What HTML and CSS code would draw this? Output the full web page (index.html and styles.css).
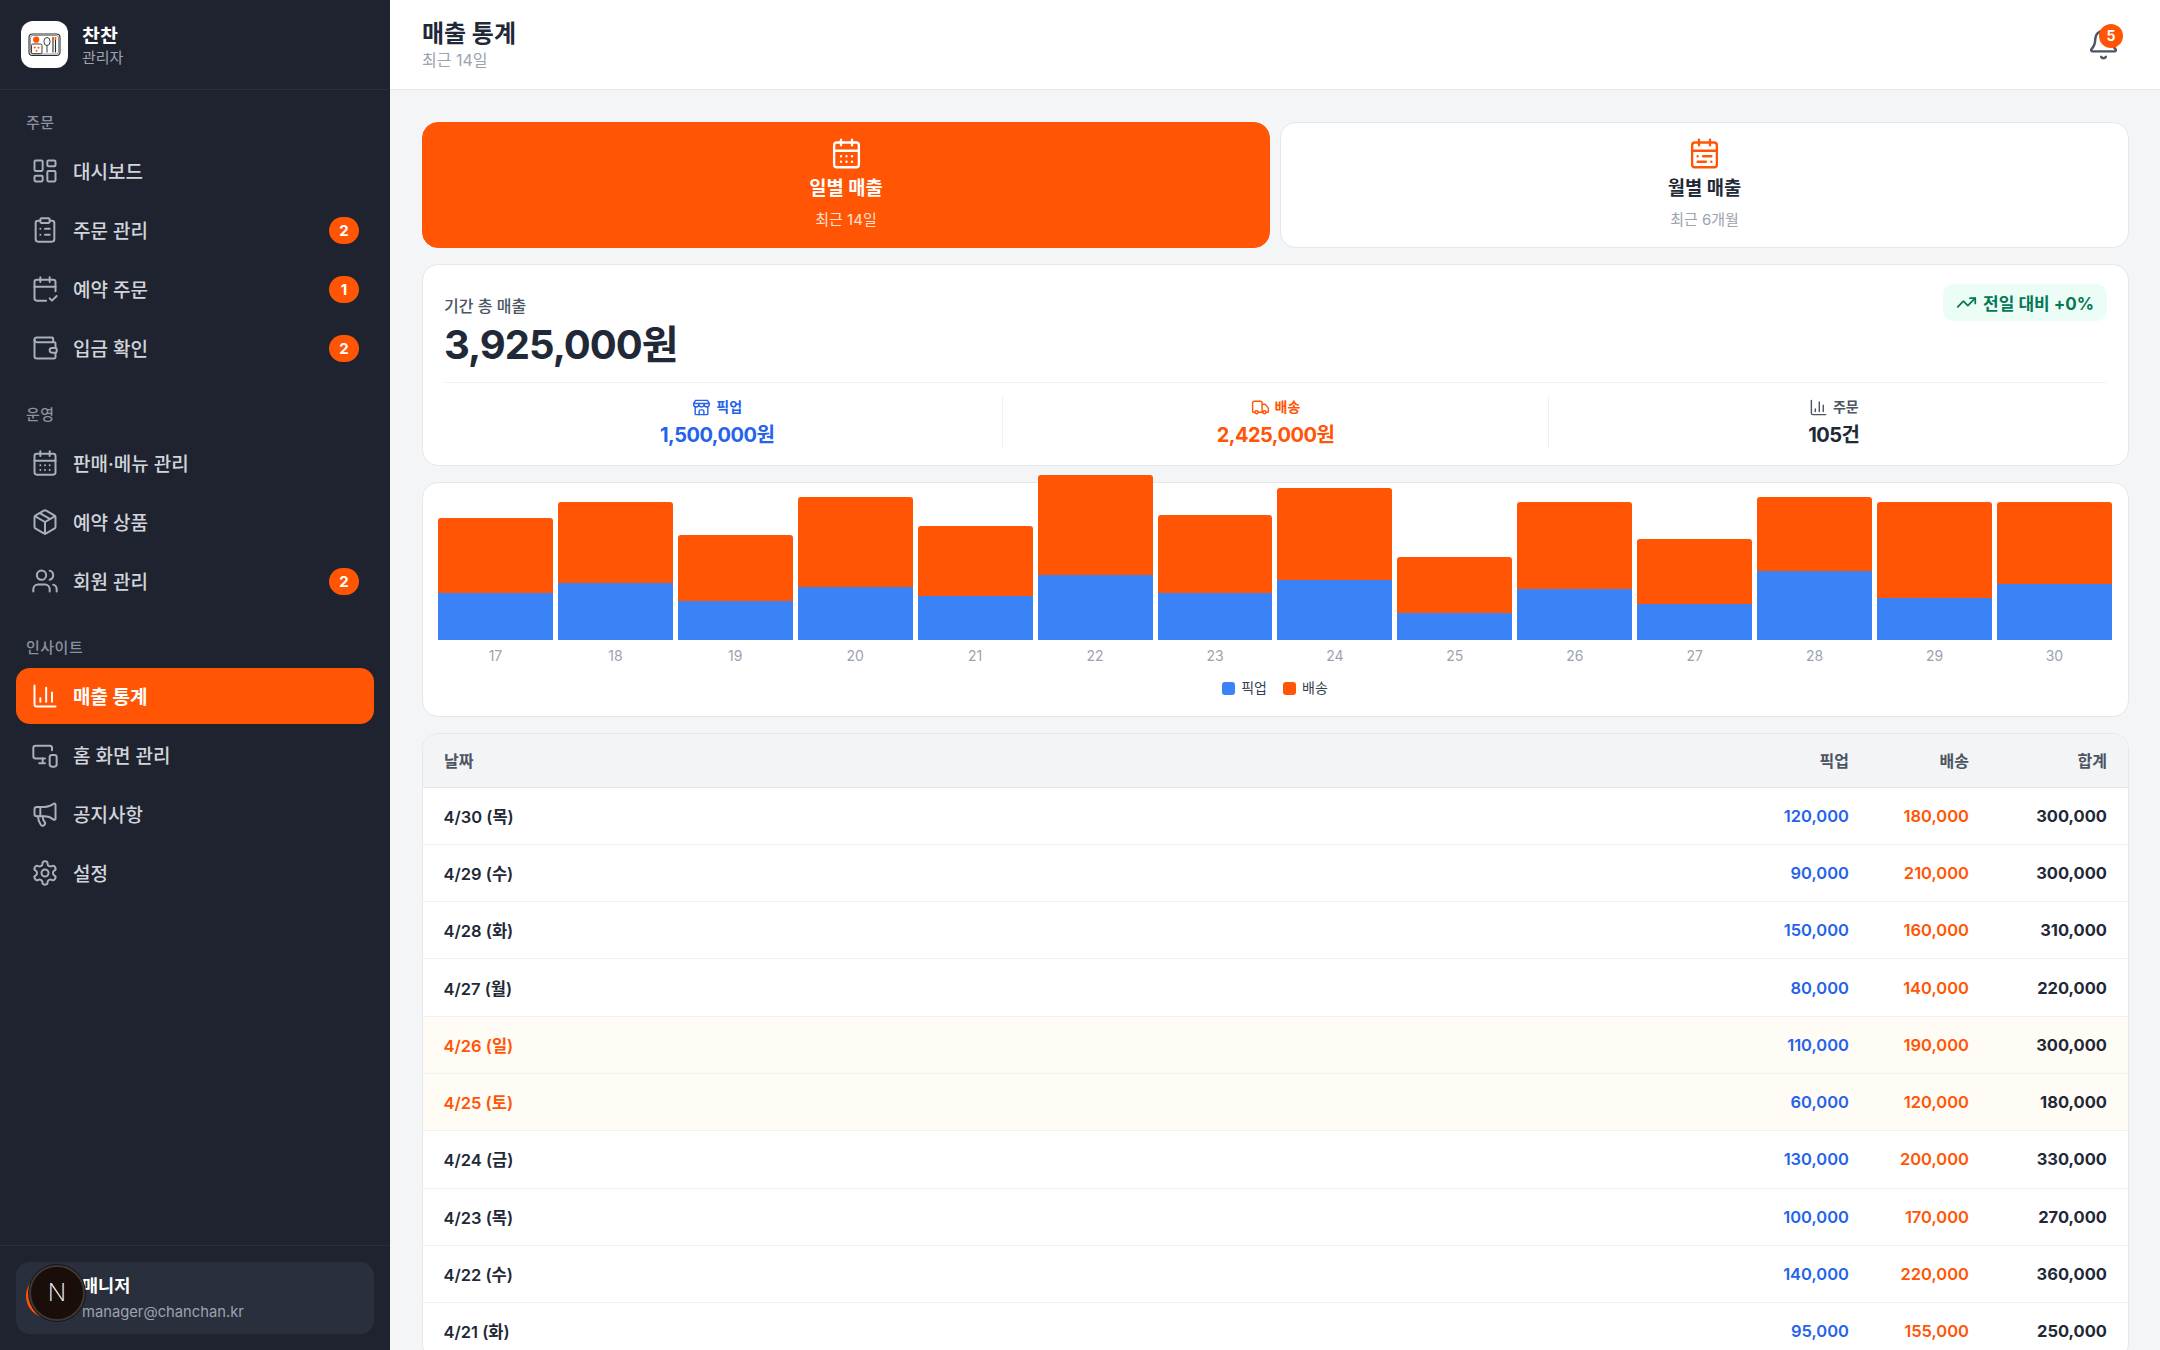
FILE: index.html
```html
<!DOCTYPE html>
<html lang="ko">
<head>
    <meta charset="utf-8">
    <title>매출 통계</title>
    <link rel="stylesheet" href="styles.css">
</head>
<body>
<div class="layout">
    <aside class="sidebar">
        <div class="brand">
            <div class="brand-logo">
                <svg viewBox="0 0 47 47" width="47" height="47" fill="none" stroke="#2b2b2b" stroke-width="0.9">
                    <rect x="8" y="13" width="31" height="21.500" rx="3.500" stroke-width="1.100"/>
                    <rect x="9.500" y="14.500" width="28" height="18.500" rx="2.200" stroke-width="0.500"/>
                    <circle cx="15.200" cy="18.700" r="3.100" fill="#ff5505" stroke="none"/>
                    <rect x="10.500" y="23" width="10.500" height="9.700" rx="1.300"/>
                    <circle cx="13.800" cy="26.500" r="1" fill="#ff5505" stroke="none"/>
                    <circle cx="17.500" cy="26.800" r="1" fill="#ff5505" stroke="none"/>
                    <circle cx="15.500" cy="29.800" r="1" fill="#ff5505" stroke="none"/>
                    <ellipse cx="26" cy="20.500" rx="3.100" ry="4"/>
                    <path d="M26 24.500v7"/>
                    <path d="M32 16v15.500M34.500 16v15.500" stroke-width="1.100"/>
                    <path d="M32 16v3M34.500 16v3" stroke="#ff5505" stroke-width="1.400"/>
                </svg>
            </div>
            <div>
                <div class="brand-name">찬찬</div>
                <div class="brand-sub">관리자</div>
            </div>
        </div>

        <nav class="nav">
            <div class="nav-label">주문</div>
            <a class="nav-item">
                <svg class="nav-icon" viewBox="0 0 24 24"><rect x="3" y="3" width="7" height="9" rx="1"/><rect x="14" y="3" width="7" height="5" rx="1"/><rect x="14" y="12" width="7" height="9" rx="1"/><rect x="3" y="16" width="7" height="5" rx="1"/></svg>
                <span>대시보드</span>
            </a>
            <a class="nav-item">
                <svg class="nav-icon" viewBox="0 0 24 24"><rect x="8" y="2" width="8" height="4" rx="1"/><path d="M16 4h2a2 2 0 0 1 2 2v14a2 2 0 0 1-2 2H6a2 2 0 0 1-2-2V6a2 2 0 0 1 2-2h2"/><path d="M12 11h4M12 16h4M8 11h.01M8 16h.01"/></svg>
                <span>주문 관리</span>
                <b class="nav-badge">2</b>
            </a>
            <a class="nav-item">
                <svg class="nav-icon" viewBox="0 0 24 24"><path d="M8 2v4M16 2v4"/><path d="M21 14V6a2 2 0 0 0-2-2H5a2 2 0 0 0-2 2v14a2 2 0 0 0 2 2h8"/><path d="M3 10h18"/><path d="m16 20 2 2 4-4"/></svg>
                <span>예약 주문</span>
                <b class="nav-badge">1</b>
            </a>
            <a class="nav-item">
                <svg class="nav-icon" viewBox="0 0 24 24"><path d="M19 7V4a1 1 0 0 0-1-1H5a2 2 0 0 0 0 4h15a1 1 0 0 1 1 1v4h-3a2 2 0 0 0 0 4h3a1 1 0 0 0 1-1v-2a1 1 0 0 0-1-1"/><path d="M3 5v14a2 2 0 0 0 2 2h15a1 1 0 0 0 1-1v-4"/></svg>
                <span>입금 확인</span>
                <b class="nav-badge">2</b>
            </a>

            <div class="nav-label">운영</div>
            <a class="nav-item">
                <svg class="nav-icon" viewBox="0 0 24 24"><rect x="3" y="4" width="18" height="18" rx="2"/><path d="M8 2v4M16 2v4M3 10h18M8 14h.01M12 14h.01M16 14h.01M8 18h.01M12 18h.01M16 18h.01"/></svg>
                <span>판매·메뉴 관리</span>
            </a>
            <a class="nav-item">
                <svg class="nav-icon" viewBox="0 0 24 24"><path d="M21 8a2 2 0 0 0-1-1.730l-7-4a2 2 0 0 0-2 0l-7 4A2 2 0 0 0 3 8v8a2 2 0 0 0 1 1.730l7 4a2 2 0 0 0 2 0l7-4A2 2 0 0 0 21 16Z"/><path d="m3.300 7 8.700 5 8.700-5M12 22V12M7.500 4.300l9 5.200"/></svg>
                <span>예약 상품</span>
            </a>
            <a class="nav-item">
                <svg class="nav-icon" viewBox="0 0 24 24"><path d="M16 21v-2a4 4 0 0 0-4-4H6a4 4 0 0 0-4 4v2"/><circle cx="9" cy="7" r="4"/><path d="M22 21v-2a4 4 0 0 0-3-3.870M16 3.130a4 4 0 0 1 0 7.750"/></svg>
                <span>회원 관리</span>
                <b class="nav-badge">2</b>
            </a>

            <div class="nav-label">인사이트</div>
            <a class="nav-item active">
                <svg class="nav-icon" viewBox="0 0 24 24"><path d="M3 3v16a2 2 0 0 0 2 2h16M8 17v-3M13 17V5M18 17V9"/></svg>
                <span>매출 통계</span>
            </a>
            <a class="nav-item">
                <svg class="nav-icon" viewBox="0 0 24 24"><path d="M18 8V6a2 2 0 0 0-2-2H4a2 2 0 0 0-2 2v7a2 2 0 0 0 2 2h8"/><path d="M10 19v-4M7 19h5"/><rect x="16" y="12" width="6" height="10" rx="2"/></svg>
                <span>홈 화면 관리</span>
            </a>
            <a class="nav-item">
                <svg class="nav-icon" viewBox="0 0 24 24"><path d="M11 6a13 13 0 0 0 8.400-2.800A1 1 0 0 1 21 4v12a1 1 0 0 1-1.600.8A13 13 0 0 0 11 14H5a2 2 0 0 1-2-2V8a2 2 0 0 1 2-2z"/><path d="M6 14a12 12 0 0 0 2.400 7.200 2 2 0 0 0 3.200-2.400A8 8 0 0 1 10 14"/><path d="M8 6v8"/></svg>
                <span>공지사항</span>
            </a>
            <a class="nav-item">
                <svg class="nav-icon" viewBox="0 0 24 24"><path d="M12.220 2h-.44a2 2 0 0 0-2 2v.18a2 2 0 0 1-1 1.730l-.43.25a2 2 0 0 1-2 0l-.15-.08a2 2 0 0 0-2.730.73l-.22.38a2 2 0 0 0 .73 2.730l.15.1a2 2 0 0 1 1 1.720v.51a2 2 0 0 1-1 1.740l-.15.09a2 2 0 0 0-.73 2.730l.22.38a2 2 0 0 0 2.730.73l.15-.08a2 2 0 0 1 2 0l.43.25a2 2 0 0 1 1 1.730V20a2 2 0 0 0 2 2h.44a2 2 0 0 0 2-2v-.18a2 2 0 0 1 1-1.730l.43-.25a2 2 0 0 1 2 0l.15.08a2 2 0 0 0 2.730-.73l.22-.39a2 2 0 0 0-.73-2.730l-.15-.08a2 2 0 0 1-1-1.740v-.5a2 2 0 0 1 1-1.740l.15-.09a2 2 0 0 0 .73-2.730l-.22-.38a2 2 0 0 0-2.730-.73l-.15.08a2 2 0 0 1-2 0l-.43-.25a2 2 0 0 1-1-1.730V4a2 2 0 0 0-2-2z"/><circle cx="12" cy="12" r="3"/></svg>
                <span>설정</span>
            </a>
        </nav>

        <div class="side-footer">
            <div class="user-card">
                <div class="user-avatar"></div>
                <div>
                    <div class="user-name">매니저</div>
                    <div class="user-mail">manager@chanchan.kr</div>
                </div>
                <div class="dev-badge">N</div>
            </div>
        </div>
    </aside>

    <div class="main">
        <header class="topbar">
            <div>
                <h1 class="page-title">매출 통계</h1>
                <div class="page-sub">최근 14일</div>
            </div>
            <div class="bell">
                <svg viewBox="0 0 24 24" width="33" height="33" fill="none" stroke="#4b5563" stroke-width="1.800" stroke-linecap="round" stroke-linejoin="round"><path d="M10.300 21a2 2 0 0 0 3.400 0"/><path d="M3.300 15.300A1 1 0 0 0 4 17h16a1 1 0 0 0 .7-1.700C19.400 14 18 12.500 18 8A6 6 0 0 0 6 8c0 4.500-1.400 6-2.700 7.300"/></svg>
                <span class="bell-count">5</span>
            </div>
        </header>

        <div class="content">
            <div class="tabs">
                <div class="tab active">
                    <svg class="tab-icon" viewBox="0 0 24 24"><rect x="3" y="4" width="18" height="18" rx="2"/><path d="M8 2v4M16 2v4M3 10h18M8 14h.01M12 14h.01M16 14h.01M8 18h.01M12 18h.01M16 18h.01"/></svg>
                    <div class="tab-title">일별 매출</div>
                    <div class="tab-sub">최근 14일</div>
                </div>
                <div class="tab">
                    <svg class="tab-icon" viewBox="0 0 24 24"><rect x="3" y="4" width="18" height="18" rx="2"/><path d="M8 2v4M16 2v4M3 10h18M7 14h.01M11 14h6M7 18h6M17 18h.01"/></svg>
                    <div class="tab-title">월별 매출</div>
                    <div class="tab-sub">최근 6개월</div>
                </div>
            </div>

            <section class="card summary">
                <div class="summary-top">
                    <div>
                        <div class="summary-label">기간 총 매출</div>
                        <div class="summary-total">3,925,000원</div>
                    </div>
                    <div class="trend">
                        <svg viewBox="0 0 24 24" width="21" height="21" fill="none" stroke="#047857" stroke-width="2" stroke-linecap="round" stroke-linejoin="round"><path d="M16 7h6v6"/><path d="m22 7-8.500 8.500-5-5L2 17"/></svg>
                        전일 대비 +0%
                    </div>
                </div>
                <div class="stats">
                    <div class="stat">
                        <div class="stat-label pickup">
                            <svg viewBox="0 0 24 24" width="19" height="19" fill="none" stroke="currentColor" stroke-width="1.800" stroke-linecap="round" stroke-linejoin="round"><path d="m2 7 2.500-4h15L22 7M2 7v1a3.300 3.300 0 0 0 6.700 0 3.300 3.300 0 0 0 6.600 0 3.300 3.300 0 0 0 6.700 0V7M2 7h20"/><path d="M4 11v9a1 1 0 0 0 1 1h14a1 1 0 0 0 1-1v-9"/><path d="M15 21v-4a2 2 0 0 0-2-2h-2a2 2 0 0 0-2 2v4"/></svg>
                            픽업
                        </div>
                        <div class="stat-value pickup">1,500,000원</div>
                    </div>
                    <div class="stat stat-mid">
                        <div class="stat-label delivery">
                            <svg viewBox="0 0 24 24" width="19" height="19" fill="none" stroke="currentColor" stroke-width="1.800" stroke-linecap="round" stroke-linejoin="round"><path d="M14 18V6a2 2 0 0 0-2-2H4a2 2 0 0 0-2 2v11a1 1 0 0 0 1 1h2M15 18H9M19 18h2a1 1 0 0 0 1-1v-3.650a1 1 0 0 0-.22-.62l-3.480-4.350A1 1 0 0 0 17.500 8H14"/><circle cx="17" cy="18" r="2"/><circle cx="7" cy="18" r="2"/></svg>
                            배송
                        </div>
                        <div class="stat-value delivery">2,425,000원</div>
                    </div>
                    <div class="stat">
                        <div class="stat-label">
                            <svg viewBox="0 0 24 24" width="19" height="19" fill="none" stroke="currentColor" stroke-width="1.800" stroke-linecap="round" stroke-linejoin="round"><path d="M3 3v16a2 2 0 0 0 2 2h16M8 17v-3M13 17V5M18 17V9"/></svg>
                            주문
                        </div>
                        <div class="stat-value">105건</div>
                    </div>
                </div>
            </section>

            <section class="card chart">
                <div class="bars">
                    <div class="bar-col"><div class="bar-top" style="height:75px"></div><div class="bar-bot" style="height:47px"></div><span class="bar-day">17</span></div>
                    <div class="bar-col"><div class="bar-top" style="height:81px"></div><div class="bar-bot" style="height:57px"></div><span class="bar-day">18</span></div>
                    <div class="bar-col"><div class="bar-top" style="height:66px"></div><div class="bar-bot" style="height:39px"></div><span class="bar-day">19</span></div>
                    <div class="bar-col"><div class="bar-top" style="height:90px"></div><div class="bar-bot" style="height:53px"></div><span class="bar-day">20</span></div>
                    <div class="bar-col"><div class="bar-top" style="height:70px"></div><div class="bar-bot" style="height:44px"></div><span class="bar-day">21</span></div>
                    <div class="bar-col"><div class="bar-top" style="height:100px"></div><div class="bar-bot" style="height:65px"></div><span class="bar-day">22</span></div>
                    <div class="bar-col"><div class="bar-top" style="height:78px"></div><div class="bar-bot" style="height:47px"></div><span class="bar-day">23</span></div>
                    <div class="bar-col"><div class="bar-top" style="height:92px"></div><div class="bar-bot" style="height:60px"></div><span class="bar-day">24</span></div>
                    <div class="bar-col"><div class="bar-top" style="height:56px"></div><div class="bar-bot" style="height:27px"></div><span class="bar-day">25</span></div>
                    <div class="bar-col"><div class="bar-top" style="height:87px"></div><div class="bar-bot" style="height:51px"></div><span class="bar-day">26</span></div>
                    <div class="bar-col"><div class="bar-top" style="height:65px"></div><div class="bar-bot" style="height:36px"></div><span class="bar-day">27</span></div>
                    <div class="bar-col"><div class="bar-top" style="height:74px"></div><div class="bar-bot" style="height:69px"></div><span class="bar-day">28</span></div>
                    <div class="bar-col"><div class="bar-top" style="height:96px"></div><div class="bar-bot" style="height:42px"></div><span class="bar-day">29</span></div>
                    <div class="bar-col"><div class="bar-top" style="height:82px"></div><div class="bar-bot" style="height:56px"></div><span class="bar-day">30</span></div>
                </div>
                <div class="legend">
                    <span class="legend-item"><i class="swatch blue"></i>픽업</span>
                    <span class="legend-item"><i class="swatch orange"></i>배송</span>
                </div>
            </section>

            <section class="card table-card">
                <table class="sales">
                    <thead>
                        <tr><th>날짜</th><th class="num col-a">픽업</th><th class="num col-b">배송</th><th class="num col-c">합계</th></tr>
                    </thead>
                    <tbody>
                        <tr><td>4/30 (목)</td><td class="num pickup">120,000</td><td class="num delivery">180,000</td><td class="num total">300,000</td></tr>
                        <tr><td>4/29 (수)</td><td class="num pickup">90,000</td><td class="num delivery">210,000</td><td class="num total">300,000</td></tr>
                        <tr><td>4/28 (화)</td><td class="num pickup">150,000</td><td class="num delivery">160,000</td><td class="num total">310,000</td></tr>
                        <tr><td>4/27 (월)</td><td class="num pickup">80,000</td><td class="num delivery">140,000</td><td class="num total">220,000</td></tr>
                        <tr class="weekend"><td>4/26 (일)</td><td class="num pickup">110,000</td><td class="num delivery">190,000</td><td class="num total">300,000</td></tr>
                        <tr class="weekend"><td>4/25 (토)</td><td class="num pickup">60,000</td><td class="num delivery">120,000</td><td class="num total">180,000</td></tr>
                        <tr><td>4/24 (금)</td><td class="num pickup">130,000</td><td class="num delivery">200,000</td><td class="num total">330,000</td></tr>
                        <tr><td>4/23 (목)</td><td class="num pickup">100,000</td><td class="num delivery">170,000</td><td class="num total">270,000</td></tr>
                        <tr><td>4/22 (수)</td><td class="num pickup">140,000</td><td class="num delivery">220,000</td><td class="num total">360,000</td></tr>
                        <tr><td>4/21 (화)</td><td class="num pickup">95,000</td><td class="num delivery">155,000</td><td class="num total">250,000</td></tr>
                    </tbody>
                </table>
            </section>
        </div>
    </div>
</div>
</body>
</html>
```
FILE: styles.css
```css
* {
    box-sizing: border-box;
}

html, body {
    margin: 0;
    height: 100%;
    overflow: hidden;
}

body {
    font-family: Inter, "Noto Sans CJK KR", sans-serif;
    color: #1f2937;
    background: #f4f5f7;
}

.layout {
    display: flex;
    height: 100vh;
}

/* sidebar */
.sidebar {
    width: 390px;
    flex-shrink: 0;
    display: flex;
    flex-direction: column;
    background: #1f2330;
}

.brand {
    height: 90px;
    padding: 0 21px;
    display: flex;
    align-items: center;
    gap: 14px;
    border-bottom: 1px solid #2a2f3d;
}

.brand-logo {
    width: 47px;
    height: 47px;
    background: #fff;
    border-radius: 12px;
    display: flex;
    align-items: center;
    justify-content: center;
}

.brand-name {
    font-size: 19.500px;
    line-height: 26px;
    font-weight: 700;
    color: #fff;
}

.brand-sub {
    font-size: 15px;
    line-height: 18px;
    color: #9ca3af;
}

.nav {
    flex: 1;
    padding: 20px 16px 0;
}

.nav-label {
    padding: 0 10px;
    height: 24px;
    margin: 26px 0 9px;
    font-size: 15px;
    line-height: 26px;
    letter-spacing: 0.5px;
    font-weight: 500;
    color: #8b919e;
}

.nav-label:first-child {
    margin-top: 0;
}

.nav-item {
    height: 56px;
    margin-bottom: 3px;
    padding: 0 15px;
    display: flex;
    align-items: center;
    gap: 14px;
    border-radius: 14px;
    font-size: 19px;
    font-weight: 500;
    color: #d1d5db;
}

.nav-item span {
    flex: 1;
    padding-bottom: 2px;
}

.nav-item.active {
    background: #ff5505;
    color: #fff;
    font-weight: 700;
}

.nav-icon {
    width: 28px;
    height: 28px;
    flex-shrink: 0;
    fill: none;
    stroke: #a9afbb;
    stroke-width: 1.700;
    stroke-linecap: round;
    stroke-linejoin: round;
}

.nav-item.active .nav-icon {
    stroke: #fff;
}

.nav-badge {
    width: 30px;
    height: 27px;
    border-radius: 14px;
    background: #ff5505;
    color: #fff;
    font-size: 15px;
    line-height: 27px;
    font-weight: 700;
    text-align: center;
}

.side-footer {
    height: 105px;
    padding: 16px;
    border-top: 1px solid #2a2f3d;
}

.user-card {
    position: relative;
    height: 72px;
    padding: 0 10px;
    display: flex;
    align-items: center;
    gap: 12px;
    background: #2a2f3d;
    border-radius: 14px;
}

.user-avatar {
    width: 44px;
    height: 44px;
    margin-top: -4px;
    border-radius: 50%;
    background: #ff5505;
}

.user-name {
    font-size: 17.500px;
    line-height: 24px;
    font-weight: 700;
    color: #fff;
}

.user-mail {
    margin-top: 4px;
    font-size: 14.750px;
    line-height: 20px;
    color: #9ca3af;
}

/* dev badge sits on top of the avatar */
.dev-badge {
    position: absolute;
    left: 13px;
    top: 3px;
    width: 56px;
    height: 56px;
    border-radius: 50%;
    background: #1a0e0a;
    border: 2px solid #3f3835;
    box-shadow: 0 0 0 1px #15171c;
    color: #fff;
    font-size: 24px;
    font-weight: 200;
    line-height: 52px;
    text-align: center;
}

/* main */
.main {
    flex: 1;
    min-width: 0;
    display: flex;
    flex-direction: column;
}

.topbar {
    height: 90px;
    flex-shrink: 0;
    padding: 0 32px;
    display: flex;
    align-items: center;
    justify-content: space-between;
    background: #fff;
    border-bottom: 1px solid #e5e7eb;
}

.page-title {
    margin: 0;
    font-size: 24px;
    line-height: 32px;
    font-weight: 700;
    color: #1f2937;
}

.page-sub {
    margin-top: -1px;
    font-size: 16px;
    line-height: 22px;
    color: #9ca3af;
}

.bell {
    position: relative;
    width: 33px;
    height: 33px;
    margin-right: 8.500px;
}

.bell-count {
    position: absolute;
    top: -4.500px;
    left: 12.500px;
    width: 24px;
    height: 24px;
    border-radius: 50%;
    background: #ff5505;
    color: #fff;
    font-size: 14px;
    line-height: 24px;
    font-weight: 700;
    text-align: center;
}

.content {
    flex: 1;
    min-height: 0;
    overflow: hidden;
    padding: 32px 31px 0 32px;
}

.tabs {
    display: grid;
    grid-template-columns: 848px 1fr;
    gap: 10px;
    margin-bottom: 16px;
}

.tab {
    height: 126px;
    padding-top: 13.500px;
    display: flex;
    flex-direction: column;
    align-items: center;
    background: #fff;
    border: 1px solid #e5e7eb;
    border-radius: 16px;
}

.tab.active {
    background: #ff5505;
    border-color: #ff5505;
    color: #fff;
}

.tab-icon {
    width: 33px;
    height: 33px;
    flex-shrink: 0;
    fill: none;
    stroke: #ff5505;
    stroke-width: 1.700;
    stroke-linecap: round;
    stroke-linejoin: round;
}

.tab.active .tab-icon {
    stroke: #fff;
}

.tab-title {
    margin-top: 6px;
    font-size: 18.750px;
    line-height: 26px;
    font-weight: 700;
}

.tab-sub {
    margin-top: 7px;
    font-size: 15px;
    line-height: 22px;
    color: #9ca3af;
}

.tab.active .tab-sub {
    color: #ffe0cf;
}

.card {
    background: #fff;
    border: 1px solid #e5e7eb;
    border-radius: 16px;
    margin-bottom: 16px;
}

.summary {
    height: 202px;
    padding: 19px 21px 0;
}

.summary-top {
    height: 99px;
    display: flex;
    justify-content: space-between;
    align-items: flex-start;
    border-bottom: 1px solid #f0f1f3;
}

.summary-label {
    margin-top: 11px;
    font-size: 16px;
    line-height: 22px;
    font-weight: 500;
    color: #4b5563;
}

.summary-total {
    margin-top: 3px;
    font-size: 40px;
    line-height: 50px;
    font-weight: 700;
    letter-spacing: -0.025em;
    color: #1f2937;
}

.trend {
    height: 37px;
    padding: 0 13px;
    display: flex;
    align-items: center;
    gap: 6px;
    background: #ecfdf5;
    border-radius: 10px;
    color: #047857;
    font-size: 17px;
    font-weight: 700;
}

.stats {
    display: grid;
    grid-template-columns: repeat(3, 1fr);
    gap: 12px;
    margin-top: 13px;
}

.stat {
    height: 52px;
    text-align: center;
}

.stat-mid {
    border-left: 1px solid #f0f1f3;
    border-right: 1px solid #f0f1f3;
}

.stat-label {
    display: flex;
    align-items: center;
    justify-content: center;
    gap: 5px;
    font-size: 14px;
    line-height: 22px;
    font-weight: 600;
    color: #4b5563;
}

.stat-value {
    margin-top: 3px;
    font-size: 20px;
    line-height: 28px;
    font-weight: 700;
    letter-spacing: -0.025em;
    color: #1f2937;
}

.stat-label.pickup,
.stat-value.pickup {
    color: #2563eb;
}

.stat-label.delivery,
.stat-value.delivery {
    color: #ff5505;
}

.chart {
    height: 235px;
    padding: 0 16px 0 15px;
}

.bars {
    height: 157px;
    display: flex;
    gap: 5px;
    align-items: flex-end;
}

.bar-col {
    position: relative;
    flex: 1;
    min-width: 0;
}

.bar-top {
    background: #ff5505;
    border-radius: 3px 3px 0 0;
}

.bar-bot {
    background: #3b82f6;
}

.bar-day {
    position: absolute;
    left: 0;
    right: 0;
    top: 100%;
    margin-top: 7px;
    text-align: center;
    font-size: 14px;
    line-height: 18px;
    color: #9ca3af;
}

.legend {
    margin-top: 39px;
    display: flex;
    justify-content: center;
    gap: 16px;
    font-size: 14px;
    line-height: 18px;
    color: #374151;
}

.legend-item {
    display: flex;
    align-items: center;
    gap: 6px;
}

.swatch {
    width: 13px;
    height: 13px;
    border-radius: 3px;
}

.swatch.blue {
    background: #3b82f6;
}

.swatch.orange {
    background: #ff5505;
}

.table-card {
    margin-bottom: 0;
    overflow: hidden;
}

.sales {
    width: 100%;
    border-collapse: collapse;
    font-size: 16.500px;
}

.sales th {
    height: 53px;
    padding: 0;
    text-align: left;
    background: #f3f4f6;
    border-bottom: 1px solid #e5e7eb;
    font-size: 16px;
    font-weight: 600;
    color: #4b5563;
}

.sales td {
    height: 57.300px;
    padding: 0;
    border-bottom: 1px solid #f0f1f3;
    font-weight: 600;
    color: #1f2937;
}

.sales th:first-child {
    padding-left: 21px;
}

.sales td:first-child {
    padding-left: 20.500px;
}

.sales th:last-child,
.sales td:last-child {
    padding-right: 21px;
}

.sales .num {
    text-align: right;
    font-size: 16.500px;
}

.sales th.num {
    font-size: 16px;
}

.sales td.total {
    font-weight: 700;
}

.sales .col-a {
    width: 140px;
}

.sales .col-b {
    width: 120px;
}

.sales .col-c {
    width: 159px;
}

.sales td.pickup {
    color: #2563eb;
}

.sales td.delivery {
    color: #ff5505;
}

.weekend td {
    background: #fffbf5;
}

.weekend td:first-child {
    color: #ff5505;
}
```
